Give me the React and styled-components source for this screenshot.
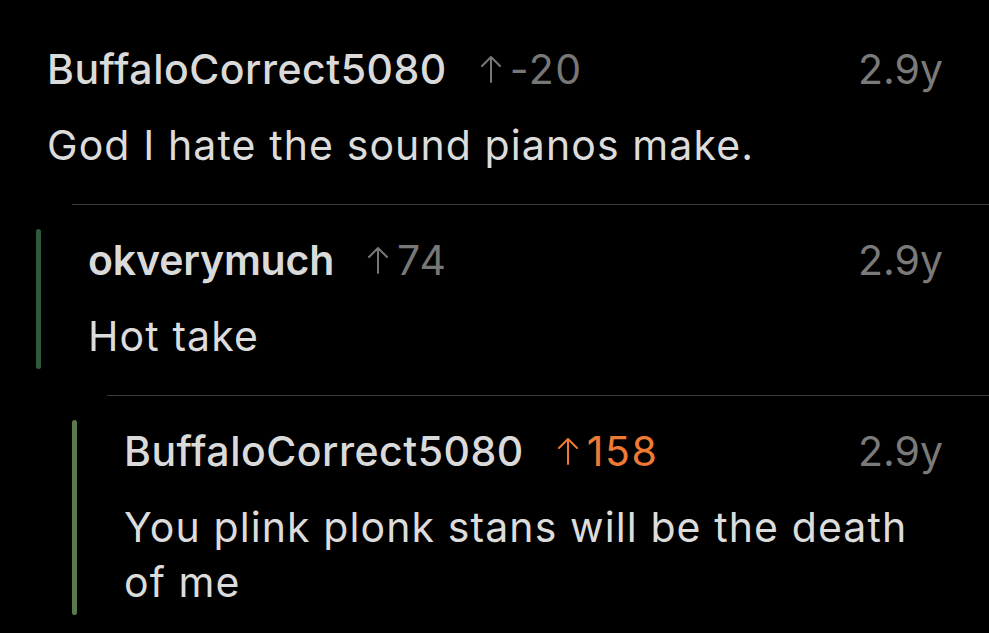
import React from 'react';
import styled, { createGlobalStyle } from 'styled-components';

const Global = createGlobalStyle`
	body {
		margin: 0;
		background: #000;
		font-family: Inter, "Noto Sans", sans-serif;
	}
`;

const Page = styled.div`
	width: 989px;
	height: 633px;
	overflow: hidden;
	background: #000;
	padding-top: 14px;
	box-sizing: border-box;
`;

const Comment = styled.div`
	display: flex;
	padding: 0 46px 0 ${p => p.$left}px;
	gap: 47px;
`;

const Bar = styled.div`
	width: 5px;
	flex: none;
	border-radius: 3px;
	background: ${p => p.$color};
	margin: 24px 0 26px;
`;

const Body = styled.div`
	flex: 1;
	display: flex;
	flex-direction: column;
	gap: 25px;
	padding: 31px 0;
`;

const Head = styled.div`
	display: flex;
	align-items: center;
	font-size: 41px;
	line-height: 48px;
	letter-spacing: 0.5px;
`;

const User = styled.span`
	color: #dadada;
	font-weight: ${p => (p.$bold ? 600 : 500)};
	letter-spacing: ${p => (p.$bold ? '-0.2px' : '0.5px')};
`;

const Score = styled.span`
	display: flex;
	align-items: center;
	margin-left: 33px;
	color: ${p => (p.$hot ? '#ee7a35' : '#777')};
	gap: 8px;
	font-weight: 400;
	letter-spacing: 1.5px;
`;

const Time = styled.span`
	margin-left: auto;
	color: #7a7a7a;
	letter-spacing: 0;
`;

const Text = styled.p`
	margin: 0;
	color: #dcdcdc;
	font-size: 41px;
	line-height: 55px;
	letter-spacing: 1.1px;
`;

const Divider = styled.div`
	height: 1px;
	background: #3a3a3a;
	margin-left: ${p => p.$indent}px;
`;

const Arrow = () => (
	<svg width="22" height="30" viewBox="0 0 22 30" fill="none" stroke="currentColor"
		strokeWidth="2" strokeLinecap="round" strokeLinejoin="round">
		<path d="M11 28V3M2 12l9-9 9 9" />
	</svg>
);

export default function App() {
	return (
		<Page>
			<Global />
			<Comment $left={47}>
				<Body>
					<Head>
						<User>BuffaloCorrect5080</User>
						<Score><Arrow />-20</Score>
						<Time>2.9y</Time>
					</Head>
					<Text>God I hate the sound pianos make.</Text>
				</Body>
			</Comment>
			<Divider $indent={72} />
			<Comment $left={36}>
				<Bar $color="#2e5a3c" />
				<Body>
					<Head>
						<User $bold>okverymuch</User>
						<Score><Arrow />74</Score>
						<Time>2.9y</Time>
					</Head>
					<Text>Hot take</Text>
				</Body>
			</Comment>
			<Divider $indent={107} />
			<Comment $left={72}>
				<Bar $color="#5b7a4b" />
				<Body>
					<Head>
						<User>BuffaloCorrect5080</User>
						<Score $hot><Arrow />158</Score>
						<Time>2.9y</Time>
					</Head>
					<Text>You plink plonk stans will be the death of me</Text>
				</Body>
			</Comment>
		</Page>
	);
}
